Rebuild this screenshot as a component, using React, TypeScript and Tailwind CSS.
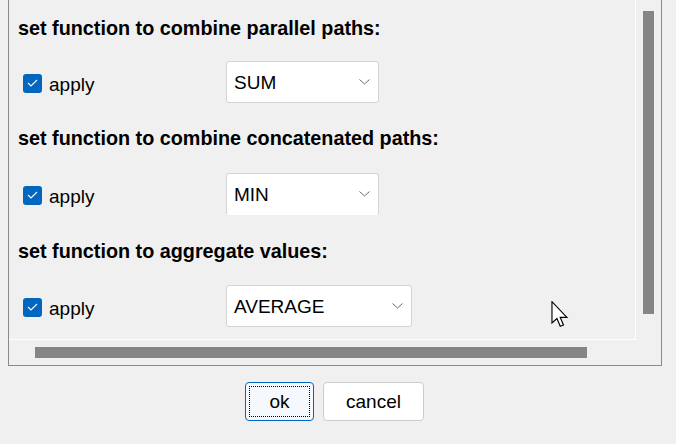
import React from "react";

const sections = [
  { title: "set function to combine parallel paths:", value: "SUM", width: "w-[153px]", top: "mt-[16px]", gap: "mt-[21px]", noBottom: false },
  { title: "set function to combine concatenated paths:", value: "MIN", width: "w-[153px]", top: "mt-[23px]", gap: "mt-[23px]", noBottom: true },
  { title: "set function to aggregate values:", value: "AVERAGE", width: "w-[186px]", top: "mt-[24px]", gap: "mt-[22px]", noBottom: false },
];

function Chevron() {
  return (
    <svg width="11" height="6" viewBox="0 0 11 6" className="shrink-0">
      <path d="M0.5 0.5 L5.5 5 L10.5 0.5" fill="none" stroke="#6b6b6b" strokeWidth="1" />
    </svg>
  );
}

function Checkbox() {
  return (
    <div className="w-[19px] h-[19px] mt-[2px] rounded-[3px] bg-[#0067c0] flex items-center justify-center">
      <svg width="11" height="8" viewBox="0 0 11 8">
        <path d="M1 4 L4 7 L10 1" fill="none" stroke="#ffffff" strokeWidth="1.1" />
      </svg>
    </div>
  );
}

function Cursor() {
  return (
    <svg
      width="19"
      height="27"
      viewBox="0 0 13 19"
      className="absolute left-[551px] top-[301px]"
    >
      <path
        d="M0.5 0.5 L0.5 15.5 L4 12.3 L6.3 17.8 L8.6 16.9 L6.3 11.5 L11 11.5 Z"
        fill="#ffffff"
        stroke="#000000"
        strokeWidth="0.8"
        strokeLinejoin="miter"
      />
    </svg>
  );
}

export default function App() {
  return (
    <div
      className="relative w-[676px] h-[444px] bg-[#f0f0f0] overflow-hidden text-black"
      style={{ fontFamily: '"Liberation Sans", Arial, sans-serif' }}
    >
      <div className="ml-[8px] w-[654px] h-[366px] border-l border-r border-b border-[#8a8a8e] flex flex-col">
        <div className="flex h-[340px]">
          <div className="w-[627px] h-[340px] border-r border-b border-white pl-[9px] flex flex-col">
            {sections.map((s) => (
              <div key={s.title} className={s.top}>
                <div className="text-[19.8px] leading-[24px] font-bold">{s.title}</div>
                <div className={`${s.gap} flex items-center h-[42px]`}>
                  <div className="w-[208px] flex items-center pl-[5px] gap-[7px]">
                    <Checkbox />
                    <span className="text-[19px] leading-[24px] pt-[5px]">apply</span>
                  </div>
                  <div
                    className={`${s.width} h-[42px] bg-white border border-[#d4d4d4] rounded-[3px] flex items-center justify-between pl-[7px] pr-[8px] ${
                      s.noBottom ? "border-b-white" : ""
                    }`}
                  >
                    <span className="text-[19px] leading-[24px] pt-[2px]">{s.value}</span>
                    <Chevron />
                  </div>
                </div>
              </div>
            ))}
          </div>
          <div className="flex-1 pl-[7px] pt-[11px]">
            <div className="w-[11px] h-[303px] bg-[#858585]" />
          </div>
        </div>
        <div className="flex-1 pl-[26px] pt-[7px]">
          <div className="w-[552px] h-[11px] bg-[#858585]" />
        </div>
      </div>

      <div className="flex gap-[9px] pl-[245px] pt-[16px]">
        <button className="w-[69px] h-[39px] rounded-[4px] border border-[#0067c0] bg-[#f5f9fd] p-[3px]">
          <div className="w-full h-full border border-dotted border-black flex items-center justify-center text-[19px] leading-[24px]">
            ok
          </div>
        </button>
        <button className="w-[101px] h-[39px] rounded-[4px] border border-[#cccccc] bg-white flex items-center justify-center text-[19px] leading-[24px]">
          cancel
        </button>
      </div>

      <Cursor />
    </div>
  );
}
